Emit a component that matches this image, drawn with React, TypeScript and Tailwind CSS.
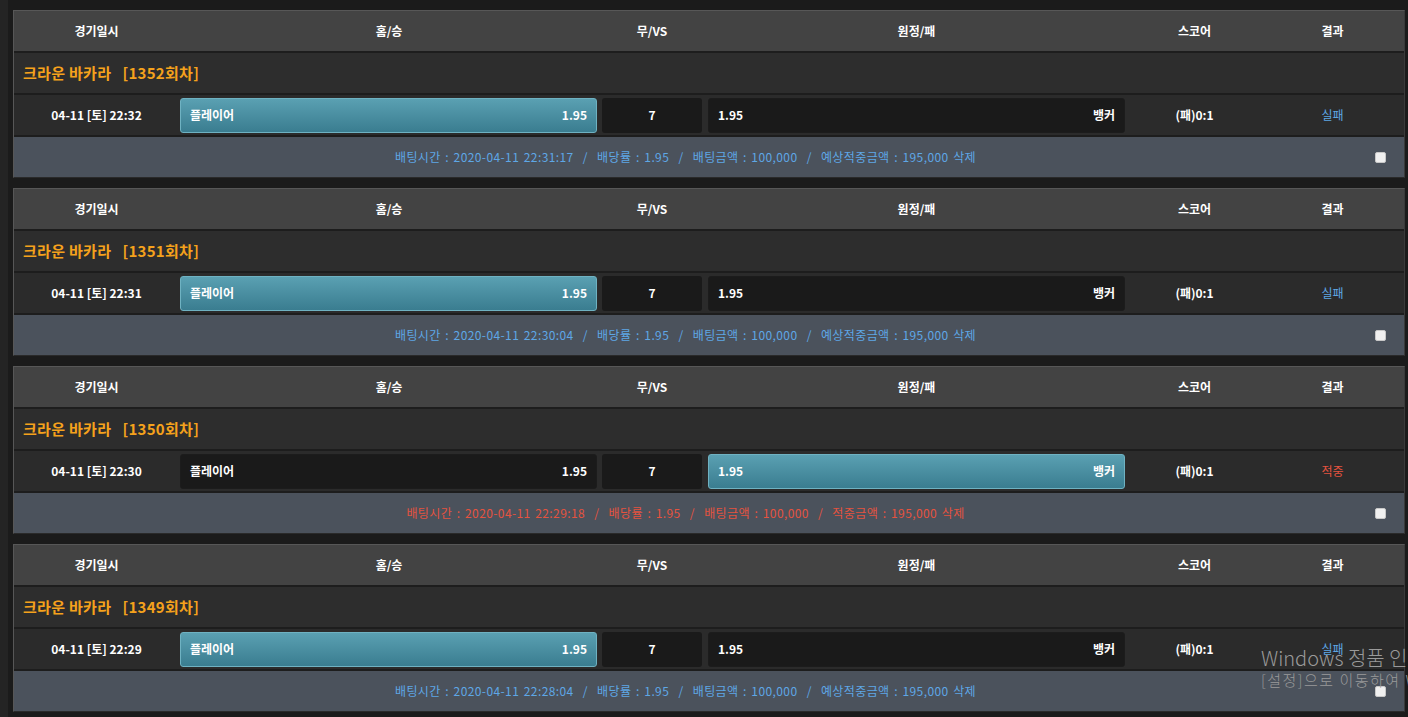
import React from "react";

type Bet = {
  round: number;
  date: string;
  pick: "home" | "away";
  result: "실패" | "적중";
  time: string;
};

const bets: Bet[] = [
  { round: 1352, date: "04-11 [토] 22:32", pick: "home", result: "실패", time: "2020-04-11 22:31:17" },
  { round: 1351, date: "04-11 [토] 22:31", pick: "home", result: "실패", time: "2020-04-11 22:30:04" },
  { round: 1350, date: "04-11 [토] 22:30", pick: "away", result: "적중", time: "2020-04-11 22:29:18" },
  { round: 1349, date: "04-11 [토] 22:29", pick: "home", result: "실패", time: "2020-04-11 22:28:04" },
];

const grid = "grid grid-cols-[165px_420px_106px_423px_133px_143px]";

function OddButton({ left, right, active }: { left: string; right: string; active: boolean }) {
  return (
    <div
      className={
        active
          ? "flex h-[35px] items-center justify-between rounded-[3px] border border-[#6fb2c2] bg-gradient-to-b from-[#5aa0b2] to-[#3a7d90] px-[9px] text-[12px] text-white"
          : "flex h-[35px] items-center justify-between rounded-[3px] border border-[#1c1c1c] bg-[#1a1a1a] px-[9px] text-[12px] text-white"
      }
    >
      <span className="font-bold">{left}</span>
      <span className="font-semibold">{right}</span>
    </div>
  );
}

function Card({ bet }: { bet: Bet }) {
  const win = bet.result === "적중";
  const infoColor = win ? "text-[#e5533f]" : "text-[#5ea7e6]";
  const info = win
    ? `배팅시간 : ${bet.time}  /  배당률 : 1.95  /  배팅금액 : 100,000  /  적중금액 : 195,000 삭제`
    : `배팅시간 : ${bet.time}  /  배당률 : 1.95  /  배팅금액 : 100,000  /  예상적중금액 : 195,000 삭제`;
  return (
    <div className="flex h-[168px] flex-col border border-[#575757] border-r-[#3a3a3a] border-b-[#2a2a2a] bg-[#1d1d1d]">
      <div className={`${grid} h-[40px] items-center bg-[#434343] text-[12px] font-bold text-white`}>
        <div className="text-center">경기일시</div>
        <div className="text-center">홈/승</div>
        <div className="text-center">무/VS</div>
        <div className="text-center">원정/패</div>
        <div className="text-center">스코어</div>
        <div className="text-center">결과</div>
      </div>
      <div className="mt-[2px] flex h-[40px] items-center bg-[#2d2d2d] pl-[9px] text-[15px] font-bold tracking-[0.3px] text-[#f5a21c] whitespace-pre">
        {`크라운 바카라   [${bet.round}회차]`}
      </div>
      <div className={`${grid} mt-[2px] h-[40px] items-center bg-[#2b2b2b] text-[12px] text-white`}>
        <div className="text-center font-bold">{bet.date}</div>
        <div className="pl-[1px] pr-[2px]">
          <OddButton left="플레이어" right="1.95" active={bet.pick === "home"} />
        </div>
        <div className="px-[3px]">
          <div className="flex h-[35px] items-center justify-center rounded-[3px] bg-[#1a1a1a] font-bold">7</div>
        </div>
        <div className="px-[3px]">
          <OddButton left="1.95" right="뱅커" active={bet.pick === "away"} />
        </div>
        <div className="text-center font-bold">(패)0:1</div>
        <div className={`text-center ${win ? "text-[#e5533f]" : "text-[#5ea7e6]"}`}>{bet.result}</div>
      </div>
      <div className="mt-[2px] flex h-[40px] items-center bg-[#4b525c] text-[12px]">
        <div className={`flex-1 text-center whitespace-pre tracking-[0.4px] [word-spacing:1.5px] ${infoColor}`}>{info}</div>
        <div className="flex w-[47px] items-center justify-center">
          <div className="h-[11px] w-[11px] rounded-[2px] border border-[#c8c8c8] bg-[#f0f0f0]" />
        </div>
      </div>
    </div>
  );
}

export default function App() {
  return (
    <div
      className="relative flex h-[717px] w-[1408px] overflow-hidden bg-[#1b1b1b]"
      style={{ fontFamily: '"Noto Sans CJK KR", "Noto Sans", sans-serif' }}
    >
      <div className="w-[8px] shrink-0 bg-[#242424]" />
      <div className="flex flex-1 flex-col gap-[10px] pl-[5px] pr-[5px] pt-[10px]">
        {bets.map((b) => (
          <Card key={b.round} bet={b} />
        ))}
      </div>
      <div className="pointer-events-none absolute left-[1261px] top-[645px] whitespace-nowrap text-[#9a9a9a]">
        <div className="text-[20px] font-light leading-[26px]">Windows 정품 인증</div>
        <div className="text-[15px] font-light leading-[18px] tracking-[1.5px]">[설정]으로 이동하여 Windows를 정품 인증합니다.</div>
      </div>
    </div>
  );
}
